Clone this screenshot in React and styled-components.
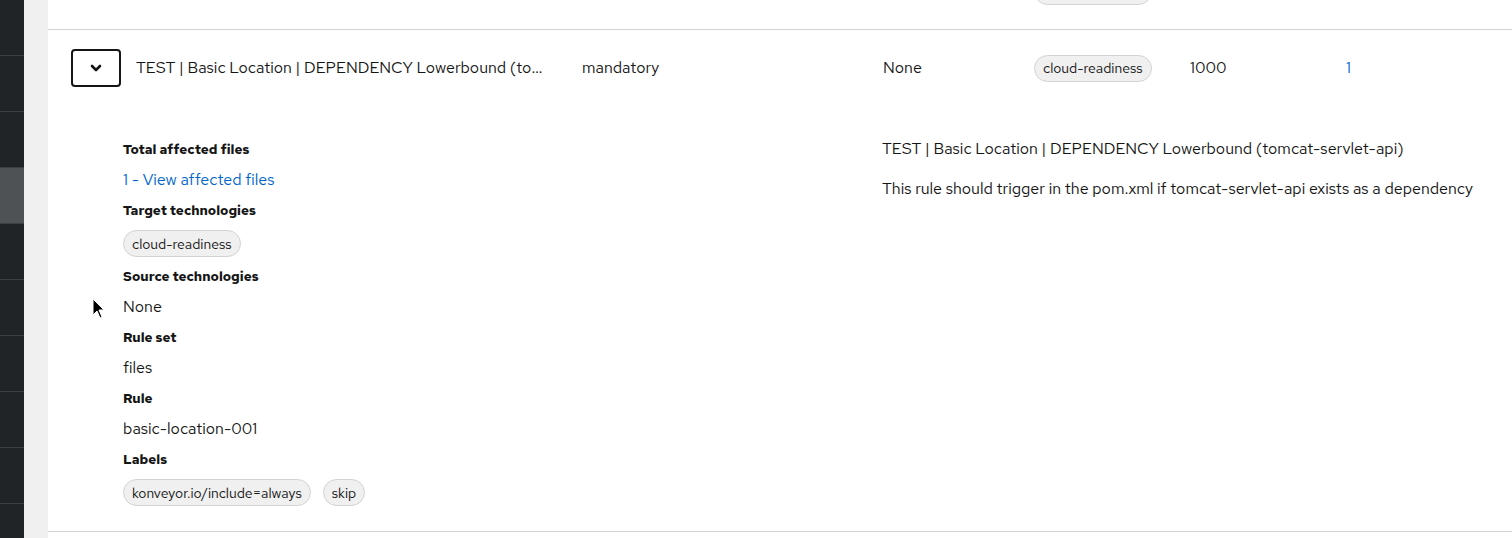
import React from "react";
import styled, { createGlobalStyle } from "styled-components";

const GlobalStyle = createGlobalStyle`
  html, body {
    margin: 0;
    padding: 0;
    height: 100%;
    overflow: hidden;
    background: #fff;
  }
  body {
    font-family: "Red Hat Text", "Lato", "Liberation Sans", sans-serif;
    color: #151515;
    -webkit-font-smoothing: antialiased;
  }
`;

const Page = styled.div`
  display: flex;
  height: 538px;
  overflow: hidden;
  position: relative;
`;

const Sidebar = styled.nav`
  width: 24px;
  flex: none;
  background: #212427;
  display: flex;
  flex-direction: column;
`;

const NavItem = styled.div`
  height: 55px;
  flex: none;
  border-bottom: 1px solid #3c3f41;
  background: ${(p) => (p.$active ? "#4f5255" : "transparent")};
`;

const Gutter = styled.div`
  width: 24px;
  flex: none;
  background: #f0f0f0;
`;

const Main = styled.main`
  flex: 1;
  min-width: 0;
  background: #fff;
`;

// the list is scrolled: only the bottom of the previous row shows
const Table = styled.div`
  margin-top: -47px;
`;

const cols = "88px 446px 301px 151px 156px 156px 1fr";

const Row = styled.div`
  display: grid;
  grid-template-columns: ${cols};
  align-items: center;
  height: 76px;
  border-bottom: ${(p) => (p.$expanded ? "none" : "1px solid #d2d2d2")};
`;

const Cell = styled.div`
  font-size: 16px;
  line-height: 24px;
  min-width: 0;
  padding-right: ${(p) => (p.$pr ? p.$pr : 0)}px;
  white-space: nowrap;
  overflow: hidden;
  text-overflow: ellipsis;
`;

const ToggleCell = styled.div`
  display: flex;
  padding-left: 23px;
`;

const ToggleButton = styled.button`
  width: 50px;
  height: 38px;
  border: 2px solid #151515;
  border-radius: 4px;
  background: #fff;
  display: flex;
  align-items: center;
  justify-content: center;
  padding: 0;
  cursor: pointer;
`;

const Link = styled.a`
  color: #0066cc;
  text-decoration: none;
  font-size: 16px;
  line-height: 24px;
`;

const Label = styled.span`
  display: inline-flex;
  align-items: center;
  height: 27px;
  box-sizing: border-box;
  padding: 0 8px;
  border: 1px solid #d2d2d2;
  border-radius: 30px;
  background: #f0f0f0;
  font-size: 14px;
  color: #151515;
  white-space: nowrap;
`;

const Expanded = styled.div`
  display: grid;
  grid-template-columns: 759px 1fr;
  padding: 33px 0 24px 75px;
  border-bottom: 1px solid #d2d2d2;
`;

const DetailList = styled.dl`
  display: flex;
  flex-direction: column;
  align-items: flex-start;
  gap: 8px;
  margin: 0;
`;

const Term = styled.dt`
  font-size: 13.5px;
  font-weight: 700;
  line-height: 21px;
`;

const Desc = styled.dd`
  margin: 0;
  padding: ${(p) => (p.$chips ? "1px 0" : "0")};
  font-size: 16px;
  line-height: 24px;
  display: flex;
  gap: 12px;
`;

const Description = styled.div`
  display: flex;
  flex-direction: column;
  gap: 16px;
  margin-top: -2px;
  font-size: 16px;
  line-height: 24px;
`;

const Cursor = styled.svg`
  position: absolute;
  left: 92px;
  top: 298px;
  pointer-events: none;
`;

const Chevron = () => (
  <svg width="12" height="8" viewBox="0 0 12 8">
    <polyline
      points="2,2 6,6 10,2"
      fill="none"
      stroke="#151515"
      strokeWidth="2.6"
      strokeLinecap="round"
      strokeLinejoin="round"
    />
  </svg>
);

const navItems = [false, false, false, true, false, false, false, false, false, false];

const details = [
  { term: "Total affected files", value: <Link href="#">1 - View affected files</Link> },
  { term: "Target technologies", chips: true, value: <Label>cloud-readiness</Label> },
  { term: "Source technologies", value: "None" },
  { term: "Rule set", value: "files" },
  { term: "Rule", value: "basic-location-001" },
  {
    term: "Labels",
    chips: true,
    value: (
      <>
        <Label>konveyor.io/include=always</Label>
        <Label>skip</Label>
      </>
    ),
  },
];

export default function App() {
  return (
    <>
      <GlobalStyle />
      <Page>
        <Sidebar>
          {navItems.map((active, i) => (
            <NavItem key={i} $active={active} />
          ))}
        </Sidebar>
        <Gutter />
        <Main>
          <Table>
            <Row>
              <div />
              <Cell />
              <Cell />
              <Cell />
              <Cell>
                <Label>cloud-readiness</Label>
              </Cell>
              <Cell />
              <Cell />
            </Row>
            <Row $expanded>
              <ToggleCell>
                <ToggleButton aria-label="Details">
                  <Chevron />
                </ToggleButton>
              </ToggleCell>
              <Cell $pr={36}>
                TEST | Basic Location | DEPENDENCY Lowerbound (tomcat-servlet-api)
              </Cell>
              <Cell>mandatory</Cell>
              <Cell>None</Cell>
              <Cell>
                <Label>cloud-readiness</Label>
              </Cell>
              <Cell>1000</Cell>
              <Cell>
                <Link href="#">1</Link>
              </Cell>
            </Row>
            <Expanded>
              <DetailList>
                {details.map((d) => (
                  <React.Fragment key={d.term}>
                    <Term>{d.term}</Term>
                    <Desc $chips={d.chips}>{d.value}</Desc>
                  </React.Fragment>
                ))}
              </DetailList>
              <Description>
                <div>TEST | Basic Location | DEPENDENCY Lowerbound (tomcat-servlet-api)</div>
                <div>
                  This rule should trigger in the pom.xml if tomcat-servlet-api exists as a
                  dependency
                </div>
              </Description>
            </Expanded>
          </Table>
        </Main>
        <Cursor width="14" height="22" viewBox="0 0 14 22">
          <path d="M1 1 L1 17 L5 13 L8 20 L10 19 L7 12 L12 12 Z" fill="#000" stroke="#fff" strokeWidth="1" />
        </Cursor>
      </Page>
    </>
  );
}
